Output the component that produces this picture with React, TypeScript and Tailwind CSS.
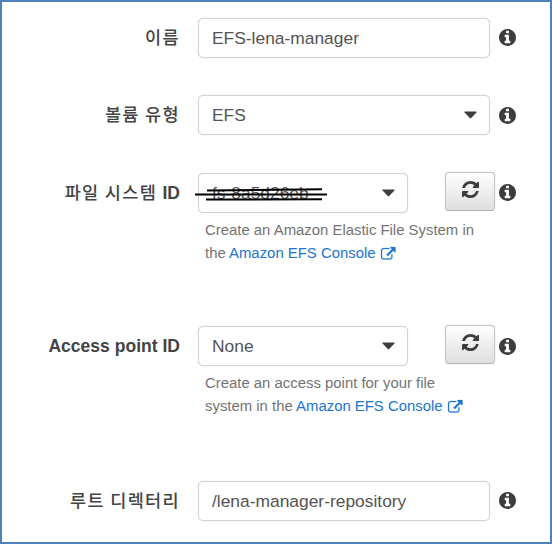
import type { ReactNode } from 'react';

const latin = "font-['Liberation_Sans','Noto_Sans_CJK_KR',sans-serif]";

function InfoIcon() {
  return (
    <svg viewBox="128 128 1536 1536" className="h-[17px] w-[17px] shrink-0 fill-[#3d3d3d]">
      <path d="M1152 1376v-160q0-14-9-23t-23-9h-96v-512q0-14-9-23t-23-9h-320q-14 0-23 9t-9 23v160q0 14 9 23t23 9h96v320h-96q-14 0-23 9t-9 23v160q0 14 9 23t23 9h448q14 0 23-9t9-23zm-128-896v-160q0-14-9-23t-23-9h-192q-14 0-23 9t-9 23v160q0 14 9 23t23 9h192q14 0 23-9t9-23zm640 416q0 209-103 385.5t-279.5 279.5-385.5 103-385.5-103-279.5-279.5-103-385.5 103-385.5 279.5-279.5 385.5-103 385.5 103 279.5 279.5 103 385.5z" />
    </svg>
  );
}

function RefreshIcon() {
  return (
    <svg viewBox="0 128 1536 1536" className="h-[17px] w-[17px] fill-[#3d3d3d]">
      <path d="M1511 1056q0 5-1 7-64 268-268 434.5t-478 166.5q-146 0-282.5-55t-243.5-157l-129 129q-19 19-45 19t-45-19-19-45v-448q0-26 19-45t45-19h448q26 0 45 19t19 45-19 45l-137 137q71 66 161 102t187 36q134 0 250-65t186-179q11-17 53-117 8-23 30-23h192q13 0 22.5 9.5t9.5 22.5zm25-800v448q0 26-19 45t-45 19h-448q-26 0-45-19t-19-45 19-45l138-138q-148-137-349-137-134 0-250 65t-186 179q-11 17-53 117-8 23-30 23h-199q-13 0-22.5-9.5t-9.5-22.5v-7q65-268 270-434.5t480-166.5q146 0 284 55.5t245 156.5l130-129q19-19 45-19t45 19 19 45z" />
    </svg>
  );
}

function ExternalLinkIcon() {
  return (
    <svg viewBox="0 0 1792 1536" className="ml-[5.500px] inline-block h-[12.5px] w-[14.5px] overflow-visible fill-[#1b75d0] stroke-[#1b75d0] stroke-[30] align-[-2px]">
      <path d="M1408 928v320q0 119-84.5 203.5t-203.5 84.5h-832q-119 0-203.5-84.5t-84.5-203.5v-832q0-119 84.5-203.5t203.5-84.5h704q14 0 23 9t9 23v64q0 14-9 23t-23 9h-704q-66 0-113 47t-47 113v832q0 66 47 113t113 47h832q66 0 113-47t47-113v-320q0-14 9-23t23-9h64q14 0 23 9t9 23zm384-864v512q0 26-19 45t-45 19-45-19l-176-176-652 652q-10 10-23 10t-23-10l-114-114q-10-10-10-23t10-23l652-652-176-176q-19-19-19-45t19-45 45-19h512q26 0 45 19t19 45z" />
    </svg>
  );
}

function Caret() {
  return (
    <svg viewBox="0 0 13 8" className="mr-[12px] h-[8px] w-[13px] fill-[#3d3d3d]">
      <path d="M1 .5h11q1 .2.4 1L7.2 7q-.7.6-1.4 0L.6 1.500q-.6-.8.4-1z" />
    </svg>
  );
}

function Label({ children, korean }: { children: ReactNode; korean?: boolean }) {
  return (
    <div
      className={`shrink-0 whitespace-nowrap text-right text-[#444] ${korean ? "w-[178px] pb-[2px] font-['Noto_Sans_CJK_KR',sans-serif] text-[17.5px] font-medium leading-[26px] tracking-[1.35px]" : 'w-[178px] pt-px text-[17.5px] font-bold tracking-[0.02px]'}`}
    >
      {children}
    </div>
  );
}

function Field({ children, select, narrow }: { children: ReactNode; select?: boolean; narrow?: boolean }) {
  return (
    <div
      className={`ml-[18px] flex h-[40px] shrink-0 items-center justify-between rounded-[5px] border-[1.500px] border-[#d2d2d2] bg-white pl-[13px] text-[17.4px] text-[#545454] shadow-[0_0_1px_#d8d8d8] ${narrow ? 'w-[209.5px]' : 'w-[292px]'}`}
    >
      {children}
      {select && <Caret />}
    </div>
  );
}

function RefreshButton() {
  return (
    <button className="mb-[3px] ml-[37.5px] mr-[4px] flex h-[39px] w-[50px] shrink-0 items-center justify-center rounded-[4px] border border-[#c6c6c6] border-b-[#b4b4b4] bg-linear-to-b from-white to-[#dedede] pb-[4px] shadow-[0_0_1px_#bbb]">
      <RefreshIcon />
    </button>
  );
}

function Help({ first, second }: { first: string; second: string }) {
  return (
    <div className="ml-[203px] mt-[6px] whitespace-nowrap text-[14.9px] leading-[22.5px] text-[#747474]">
      <div>{first}</div>
      <div>
        {second} <a className="text-[#1b75d0]">Amazon EFS Console<ExternalLinkIcon /></a>
      </div>
    </div>
  );
}

// Redacted identifier, crossed out by three hand-placed strokes.
function StruckId() {
  return (
    <span className="relative">
      fs-8a5d26eb
      <svg viewBox="195 185 134 20" className="absolute left-[-17px] top-[5px] h-[20px] w-[134px] fill-none stroke-black stroke-[2]">
        <path d="M207 190.500 L322 189.300 M195 194.500 H327 M206 199.500 L322 199.300" />
      </svg>
    </span>
  );
}

export default function App() {
  return (
    <main className={`h-[544px] w-[552px] overflow-hidden border-2 border-[#4f81bd] bg-white ${latin}`}>
      <div className="mt-[16px] flex h-[40px] items-center">
        <Label korean>이름</Label>
        <Field>EFS-lena-manager</Field>
        <div className="ml-[9px] pb-[2px]"><InfoIcon /></div>
      </div>
      <div className="mt-[37px] flex h-[40px] items-center">
        <Label korean>볼륨 유형</Label>
        <Field select>EFS</Field>
        <div className="ml-[9px]"><InfoIcon /></div>
      </div>
      <div className="mt-[38px] flex h-[40px] items-center">
        <Label korean>
          파일 시스템 <span className="font-['Liberation_Sans',sans-serif] font-bold tracking-normal">ID</span>
        </Label>
        <Field select narrow><StruckId /></Field>
        <RefreshButton />
        <div className="pb-px"><InfoIcon /></div>
      </div>
      <Help first="Create an Amazon Elastic File System in" second="the" />
      <div className="mt-[62px] flex h-[40px] items-center">
        <Label>Access point ID</Label>
        <Field select narrow>None</Field>
        <RefreshButton />
        <InfoIcon />
      </div>
      <Help first="Create an access point for your file" second="system in the" />
      <div className="mt-[64px] flex h-[40px] items-center">
        <Label korean>루트 디렉터리</Label>
        <Field>/lena-manager-repository</Field>
        <div className="ml-[9px] pb-[2px]"><InfoIcon /></div>
      </div>
    </main>
  );
}
